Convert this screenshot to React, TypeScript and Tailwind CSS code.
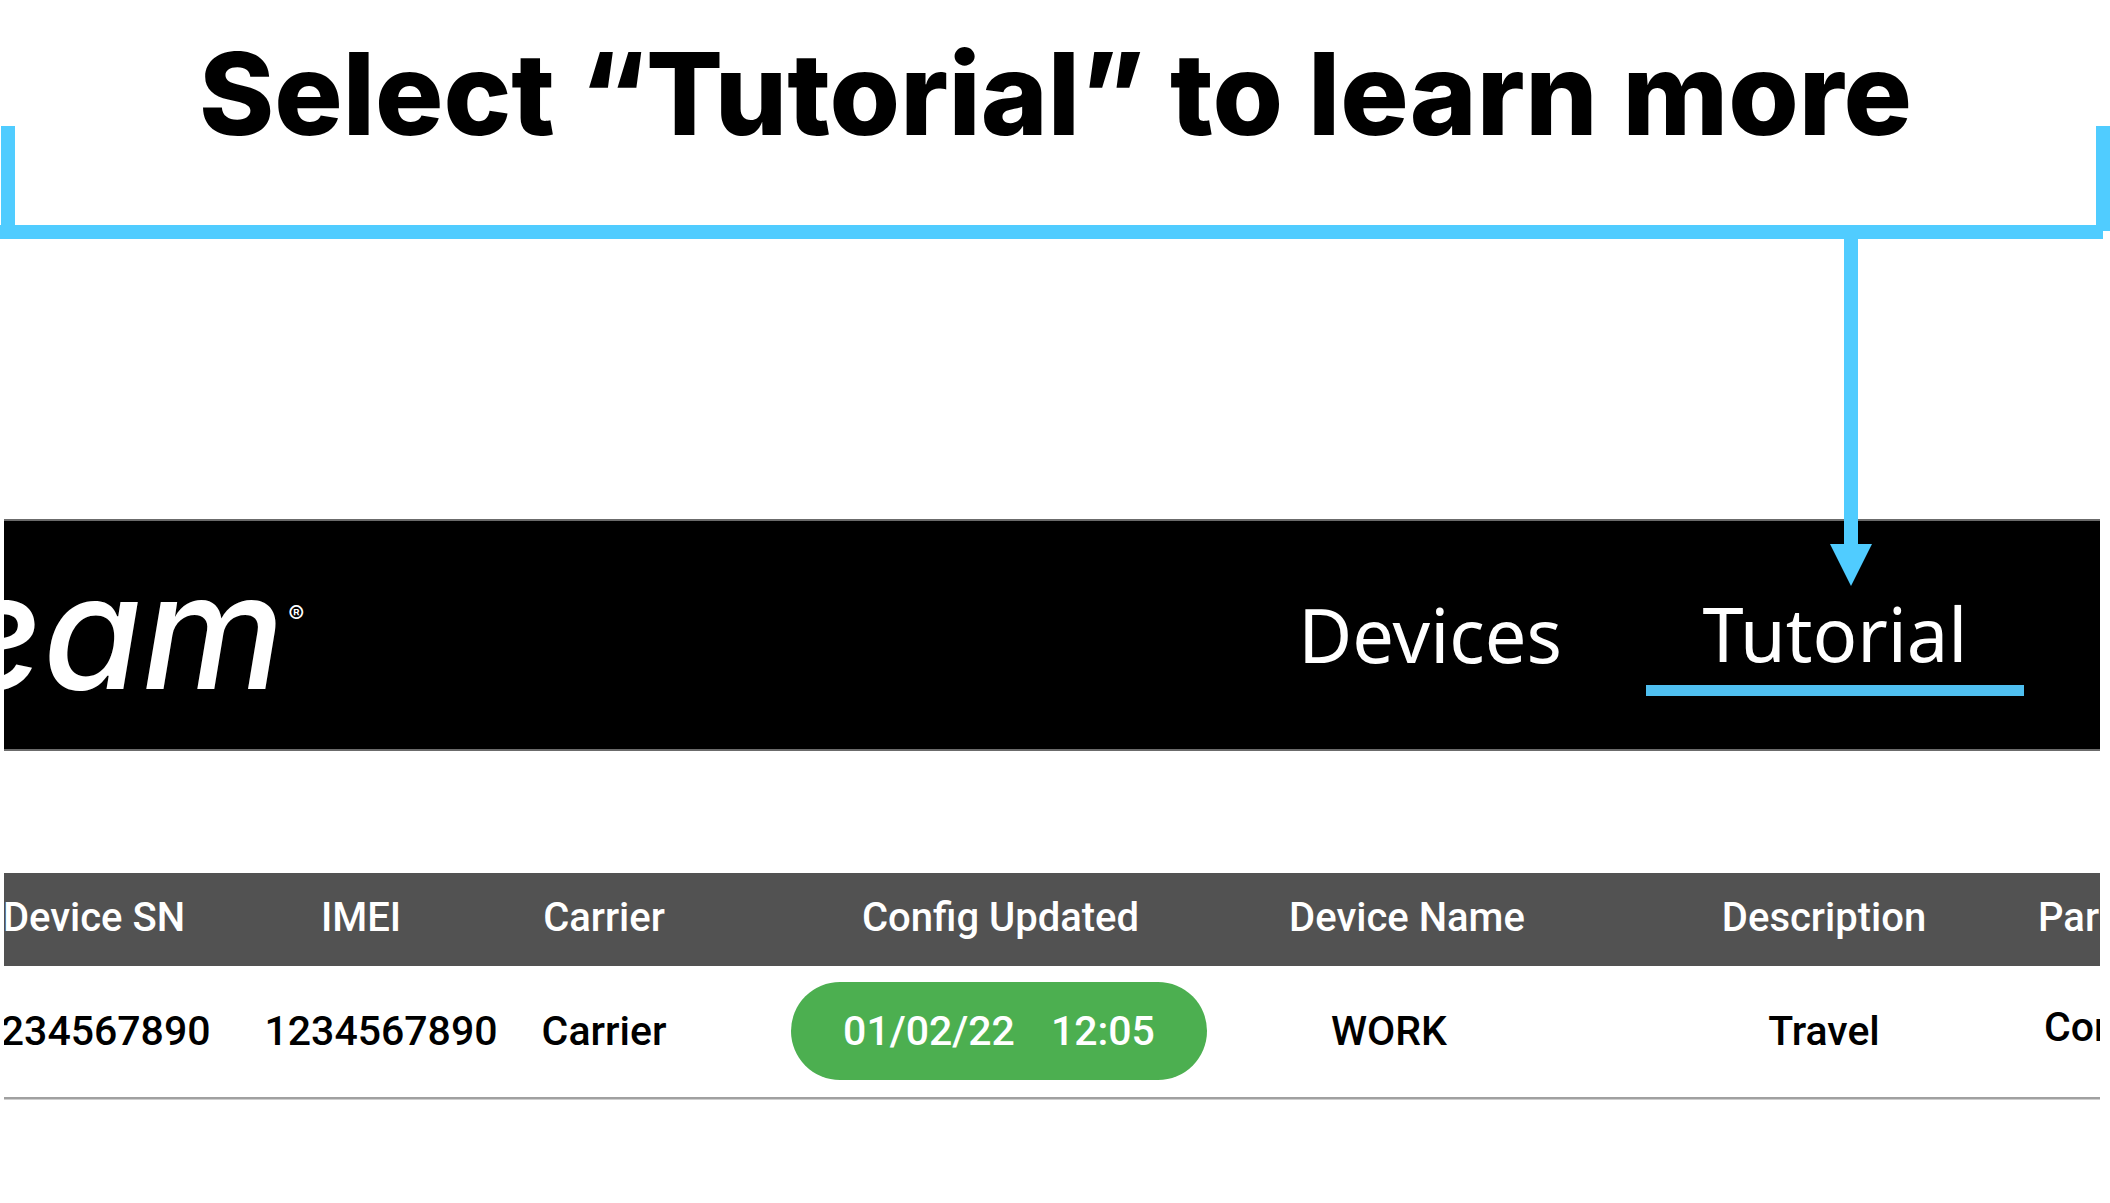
import type { ReactNode } from 'react';

type Row = {
  serial: string;
  imei: string;
  carrier: string;
  date: string;
  time: string;
  name: string;
  description: string;
  partner: string;
};

const rows: Row[] = [
  {
    serial: '1234567890',
    imei: '1234567890',
    carrier: 'Carrier',
    date: '01/02/22',
    time: '12:05',
    name: 'WORK',
    description: 'Travel',
    partner: 'Cor',
  },
];

function Callout({ children }: { children: ReactNode }) {
  return (
    <header>
      <div className="flex items-end">
        <div className="ml-px h-[99px] w-3.5 shrink-0 bg-[#50ccff]" />
        <h1 className="h-[225px] flex-1 whitespace-nowrap pt-[30px] text-center font-['Inter',sans-serif] text-[114px] leading-[128px] font-extrabold text-black">
          {children}
        </h1>
        <div className="h-[99px] w-3.5 shrink-0 bg-[#50ccff]" />
      </div>
      <div className="flex items-start">
        <div className="h-3.5 flex-1 bg-[#50ccff]" />
        <div className="h-1.5 w-[7px] bg-[#50ccff]" />
      </div>
    </header>
  );
}

/* Arrow dropping from the callout line onto the active navigation link. */
function Arrow() {
  return (
    <svg
      className="absolute bottom-[99px] left-[184px] h-[348px] w-[42px]"
      viewBox="0 0 42 348"
      fill="#50ccff"
      aria-hidden="true"
    >
      <path d="M14 0H28V306H42L21 348L0 306H14Z" />
    </svg>
  );
}

function NavBar() {
  return (
    <div className="flex h-[232px] items-center justify-between border-y-2 border-[#6b6b6b] bg-black text-white">
      <div className="-ml-[54px] flex items-start pb-2 font-['Inter',sans-serif] italic">
        <span className="text-[160px] leading-[160px] font-medium [font-feature-settings:'cv11']">
          eam
        </span>
        <span className="pt-12 pl-1 text-[24px] leading-8 not-italic">®</span>
      </div>
      <nav className="flex items-center pr-[76px] font-['Noto_Sans',sans-serif] text-[74px] leading-[94px]">
        <a href="#devices" className="mr-[84px]">
          Devices
        </a>
        <a
          href="#tutorial"
          className="relative mt-3 w-[378px] border-b-[11px] border-[#4fbff0] pb-1 text-center"
        >
          Tutorial
          <Arrow />
        </a>
      </nav>
    </div>
  );
}

function DeviceTable() {
  return (
    <table className="-ml-[51px] w-[calc(100%+51px)] table-fixed border-collapse whitespace-nowrap text-center font-['Roboto',sans-serif] font-medium">
      <colgroup>
        <col className="w-[282px]" />
        <col className="w-[292px]" />
        <col className="w-[154px]" />
        <col className="w-[569px]" />
        <col className="w-[300px]" />
        <col />
        <col className="w-[62px]" />
      </colgroup>
      <thead className="bg-[#525252] text-[40px] leading-[48px] text-white">
        <tr className="h-[93px] [&>th]:pb-1 [&>th]:font-medium">
          <th>Device SN</th>
          <th className="pr-10">IMEI</th>
          <th>Carrier</th>
          <th className="pl-[70px]">Config Updated</th>
          <th className="pl-3.5">Device Name</th>
          <th className="pl-15">Description</th>
          <th className="text-left">Par</th>
        </tr>
      </thead>
      <tbody className="text-[41px] leading-[50px] text-black">
        {rows.map((row) => (
          <tr key={row.serial} className="h-[132px] border-b-[3px] border-[#a0a0a0]">
            <td>{row.serial}</td>
            <td>{row.imei}</td>
            <td>{row.carrier}</td>
            <td className="pl-[67px]">
              <span className="inline-flex h-[98px] w-[416px] items-center justify-center gap-9 rounded-full bg-[#4caf50] align-middle text-white">
                <span>{row.date}</span>
                <span>{row.time}</span>
              </span>
            </td>
            <td className="pr-[22px]">{row.name}</td>
            <td className="pl-15">{row.description}</td>
            <td className="pb-2 pl-1.5 text-left">{row.partner}</td>
          </tr>
        ))}
      </tbody>
    </table>
  );
}

export default function App() {
  return (
    <div className="min-h-screen overflow-hidden bg-white">
      <Callout>Select “Tutorial” to learn more</Callout>
      <main className="mt-[280px] mr-2.5 ml-1 [clip-path:inset(-280px_0_0_0)]">
        <NavBar />
        <div className="mt-[122px]">
          <DeviceTable />
        </div>
      </main>
    </div>
  );
}
